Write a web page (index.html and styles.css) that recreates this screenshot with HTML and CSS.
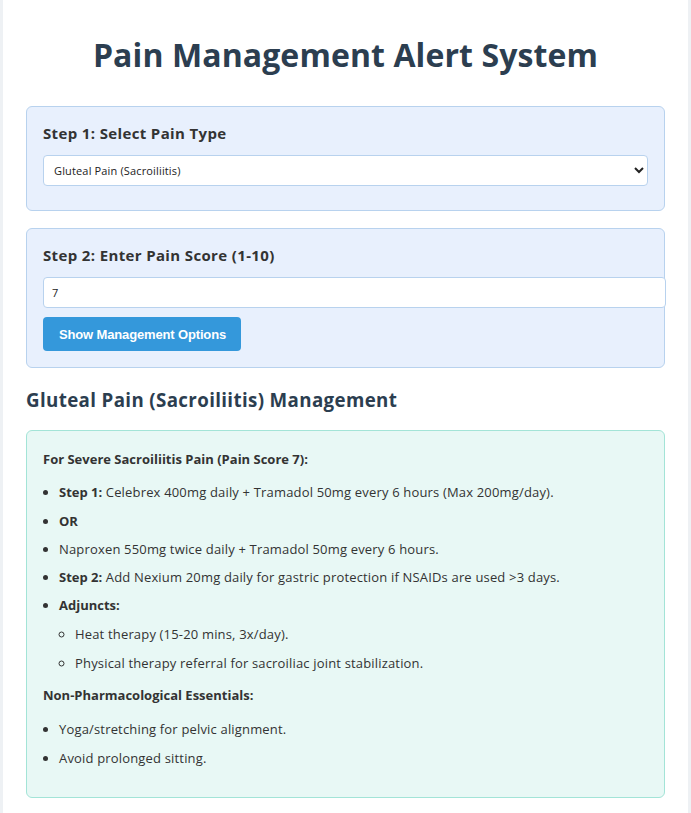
FILE: index.html
```html
<!DOCTYPE html>
<html lang="en">
<head>
<meta charset="utf-8">
<title>Pain Management Alert System</title>
<link rel="stylesheet" href="styles.css">
</head>
<body>
<div class="container">
  <h1 class="title">Pain Management Alert System</h1>

  <div class="step">
    <label class="step-label" for="pain-type">Step 1: Select Pain Type</label>
    <select id="pain-type" class="field select">
      <option>Gluteal Pain (Sacroiliitis)</option>
    </select>
  </div>

  <div class="step">
    <label class="step-label" for="pain-score">Step 2: Enter Pain Score (1-10)</label>
    <input id="pain-score" class="field input" type="text" value="7">
    <button class="btn" type="button">Show Management Options</button>
  </div>

  <h3 class="result-title">Gluteal Pain (Sacroiliitis) Management</h3>

  <div class="result">
    <p><strong>For Severe Sacroiliitis Pain (Pain Score 7):</strong></p>
    <ul class="list">
      <li><strong>Step 1:</strong> Celebrex 400mg daily + Tramadol 50mg every 6 hours (Max 200mg/day).</li>
      <li><strong>OR</strong></li>
      <li>Naproxen 550mg twice daily + Tramadol 50mg every 6 hours.</li>
      <li><strong>Step 2:</strong> Add Nexium 20mg daily for gastric protection if NSAIDs are used &gt;3 days.</li>
      <li><strong>Adjuncts:</strong>
        <ul class="sublist">
          <li>Heat therapy (15-20 mins, 3x/day).</li>
          <li>Physical therapy referral for sacroiliac joint stabilization.</li>
        </ul>
      </li>
    </ul>
    <p><strong>Non-Pharmacological Essentials:</strong></p>
    <ul class="list list-extra">
      <li>Yoga/stretching for pelvic alignment.</li>
      <li>Avoid prolonged sitting.</li>
    </ul>
  </div>
</div>
</body>
</html>
```

FILE: styles.css
```css
html, body {
  margin: 0;
  padding: 0;
}

body {
  background: #eef1f4;
  font-family: "Open Sans", "Liberation Sans", sans-serif;
  color: #333333;
}

.container {
  background: #ffffff;
  margin: 0 3px;
  padding: 1px 23px 16px;
  min-height: 800px;
}

.title {
  font-size: 32px;
  font-weight: 700;
  line-height: 40px;
  letter-spacing: 0.1px;
  color: #2c3e50;
  text-align: center;
  margin: 34px 0 31px;
}

.step {
  background: #e8f0fd;
  border: 1px solid #b8d2ee;
  border-radius: 6px;
  padding: 16px;
  margin-bottom: 17px;
}

.step-label {
  display: block;
  font-size: 15px;
  font-weight: 700;
  line-height: 20px;
  letter-spacing: 0.36px;
  color: #333333;
  margin-bottom: 12px;
}

.field {
  display: block;
  font-family: "Open Sans", "Liberation Sans", sans-serif;
  font-size: 11px;
  letter-spacing: 0.15px;
  color: #222222;
  background: #ffffff;
  border: 1px solid #b8d2ee;
  border-radius: 4px;
}

.select {
  width: 100%;
  height: 31px;
  padding: 0 6px;
  margin-bottom: 8px;
}

.input {
  width: 100%;
  height: 13px;
  padding: 8px;
  margin: 1px 0 9px;
  line-height: 13px;
}

.btn {
  display: block;
  background: #3498db;
  color: #ffffff;
  border: none;
  border-radius: 4px;
  font-family: "Liberation Sans", Arial, sans-serif;
  font-size: 13px;
  font-weight: 700;
  letter-spacing: -0.15px;
  padding: 8px 15px 8px 16px;
  height: 34px;
}

.result-title {
  font-size: 18.72px;
  font-weight: 700;
  letter-spacing: 0.37px;
  color: #2c3e50;
  margin: 18.72px 0;
}

.result {
  background: #e8f8f5;
  border: 1px solid #a3e4d7;
  border-radius: 6px;
  padding: 18px 16px 16px;
  font-size: 13px;
  line-height: 1.6;
  letter-spacing: 0.17px;
}

.result strong {
  letter-spacing: 0;
}

.result p {
  margin: 0;
}

.list {
  margin: 12px 0;
  padding-left: 16px;
}

.list li {
  margin-bottom: 7.5px;
}

.list-extra {
  margin-top: 13px;
}

.list-extra li {
  margin-bottom: 8px;
}

.sublist {
  margin: 8px 0 0;
  padding-left: 16px;
  list-style: circle;
}
```
